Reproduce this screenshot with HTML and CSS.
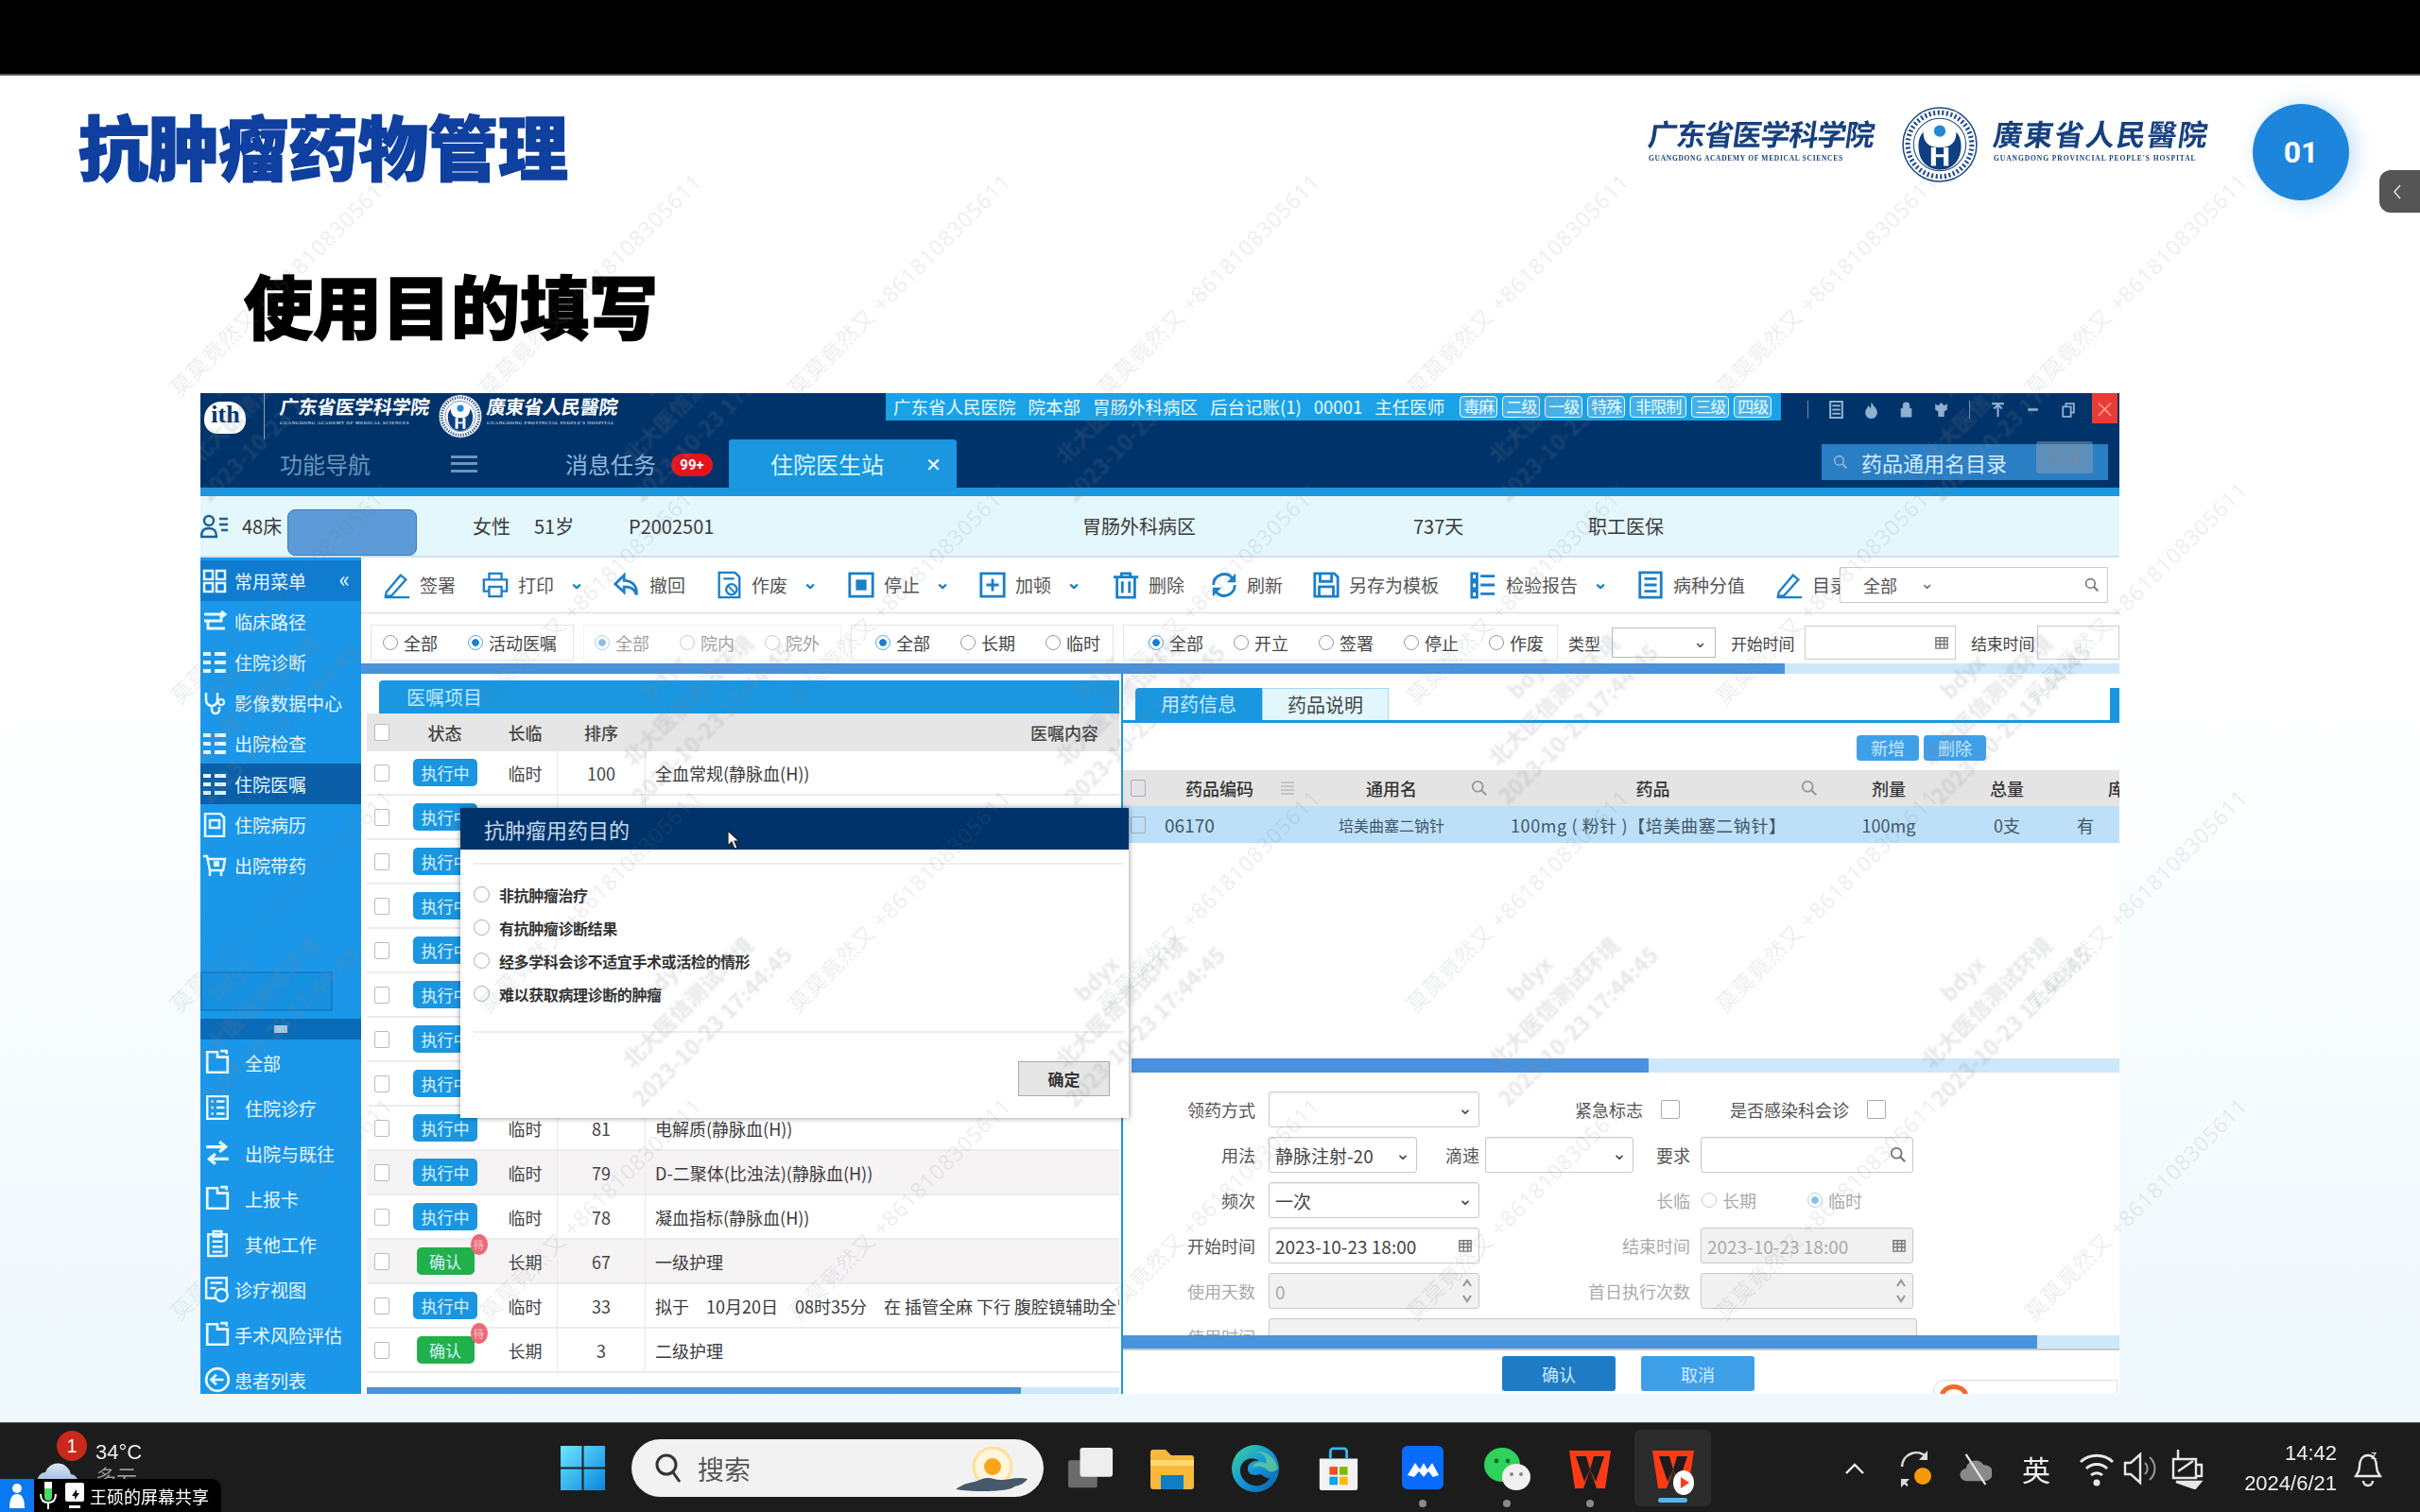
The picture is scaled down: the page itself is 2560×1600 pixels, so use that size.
FILE: index.html
```html
<!DOCTYPE html>
<html lang="zh-CN">
<head>
<meta charset="utf-8">
<title>抗肿瘤药物管理</title>
<link rel="stylesheet" href="styles.css">
</head>
<body>
<svg class="defs" width="0" height="0">
  <defs>
    <symbol id="emblem" viewBox="0 0 80 80">
      <circle cx="40" cy="40" r="38" fill="#fff" stroke="#1d4a86" stroke-width="1.5"/>
      <circle cx="40" cy="40" r="33" fill="none" stroke="#1d4a86" stroke-width="5" stroke-dasharray="2 2.5"/>
      <circle cx="40" cy="40" r="27" fill="none" stroke="#1d4a86" stroke-width="1"/>
      <path d="M40 66c-13 0-22-9-22-25 0-6 2-11 5-14 0 10 5 16 17 16s17-6 17-16c3 3 5 8 5 14 0 16-9 25-22 25z" fill="#0d3f82"/>
      <circle cx="40" cy="26" r="6" fill="#1f8bd6"/>
      <path d="M31 62V43h5v19zM44 62V43h5v19z" fill="#fff"/>
      <path d="M36 50h8v3h-8z" fill="#fff"/>
    </symbol>
    <symbol id="i-pen" viewBox="0 0 32 32"><path d="M4 24 20 5l6 5-16 18-7 1zM2 30h28" fill="none" stroke="currentColor" stroke-width="2.5"/></symbol>
    <symbol id="i-print" viewBox="0 0 32 32"><path d="M9 10V3h14v7M9 23H3V10h26v13h-6M9 18h14v11H9z" fill="none" stroke="currentColor" stroke-width="2.5"/></symbol>
    <symbol id="i-undo" viewBox="0 0 32 32"><path d="M13 5 3 15l10 9v-6c7 0 12 2 14 9 1-9-4-16-14-16z" fill="none" stroke="currentColor" stroke-width="3"/></symbol>
    <symbol id="i-void" viewBox="0 0 32 32"><path d="M5 2h18l5 5v23H5zM10 9h12" fill="none" stroke="currentColor" stroke-width="2.5"/><circle cx="19" cy="21" r="6" fill="none" stroke="currentColor" stroke-width="2.5"/><path d="M15 17l8 8" stroke="currentColor" stroke-width="2"/></symbol>
    <symbol id="i-stop" viewBox="0 0 32 32"><path d="M3 3h26v26H3z" fill="none" stroke="currentColor" stroke-width="3"/><path d="M10 10h12v12H10z" fill="currentColor"/></symbol>
    <symbol id="i-plus" viewBox="0 0 32 32"><path d="M3 3h26v26H3zM16 9v14M9 16h14" fill="none" stroke="currentColor" stroke-width="3"/></symbol>
    <symbol id="i-trash" viewBox="0 0 32 32"><path d="M2 7h28M11 7V3h10v4M6 7v23h20V7M12 12v13M20 12v13" fill="none" stroke="currentColor" stroke-width="3"/></symbol>
    <symbol id="i-refresh" viewBox="0 0 32 32"><path d="M4 16A12 12 0 0 1 25 8l3 3M28 16A12 12 0 0 1 7 24l-3-3" fill="none" stroke="currentColor" stroke-width="3"/><path d="M29 3v10H19zM3 29V19h10z" fill="currentColor"/></symbol>
    <symbol id="i-save" viewBox="0 0 32 32"><path d="M3 3h22l4 4v22H3zM9 3v9h13V3M8 29V18h16v11" fill="none" stroke="currentColor" stroke-width="3"/></symbol>
    <symbol id="i-list" viewBox="0 0 32 32"><path d="M3 3h6v7H3zM3 13h6v7H3zM3 23h6v7H3zM13 6h16M13 16h16M13 26h16" fill="none" stroke="currentColor" stroke-width="3"/></symbol>
    <symbol id="i-doc" viewBox="0 0 32 32"><path d="M4 2h24v28H4zM9 9h14M9 16h14M9 23h14" fill="none" stroke="currentColor" stroke-width="3"/></symbol>
    <symbol id="s-grid" viewBox="0 0 26 26"><path d="M2 2h9v9H2zM15 2h9v9h-9zM2 15h9v9H2zM15 15h9v9h-9z" fill="none" stroke="currentColor" stroke-width="2.5"/></symbol>
    <symbol id="s-path" viewBox="0 0 26 26"><path d="M2 5h18v7H6v8h18M20 2l4 3-4 3M2 12h4" fill="none" stroke="currentColor" stroke-width="3"/></symbol>
    <symbol id="s-rows" viewBox="0 0 26 26"><path d="M1 4h8M1 13h8M1 22h8M13 4h12M13 13h12M13 22h12" fill="none" stroke="currentColor" stroke-width="4"/></symbol>
    <symbol id="s-steth" viewBox="0 0 26 26"><path d="M4 2v8a6 6 0 0 0 12 0V2M10 16v4a4 4 0 0 0 8 0v-3" fill="none" stroke="currentColor" stroke-width="2.5"/><circle cx="20" cy="12" r="3" fill="none" stroke="currentColor" stroke-width="2"/></symbol>
    <symbol id="s-record" viewBox="0 0 26 26"><path d="M3 1h16l4 4v20H3zM8 8h10v8H8z" fill="none" stroke="currentColor" stroke-width="2.5"/></symbol>
    <symbol id="s-cart" viewBox="0 0 26 26"><path d="M1 3h4l3 15h14l2-12H6M8 18v6M20 18v6" fill="none" stroke="currentColor" stroke-width="2.5"/><path d="M12 8h6v6h-6z" fill="currentColor"/></symbol>
    <symbol id="s-folder" viewBox="0 0 26 26"><path d="M3 3h10v5h10v15H3zM16 2h6v3" fill="none" stroke="currentColor" stroke-width="2.5"/></symbol>
    <symbol id="s-form" viewBox="0 0 26 26"><path d="M3 2h20v22H3zM7 7h2M12 7h8M7 13h2M12 13h8M7 19h2M12 19h8" fill="none" stroke="currentColor" stroke-width="2.2"/></symbol>
    <symbol id="s-swap" viewBox="0 0 26 26"><path d="M2 7h17M15 2l6 5-6 5M24 19H7M11 14l-6 5 6 5" fill="none" stroke="currentColor" stroke-width="3"/></symbol>
    <symbol id="s-clip" viewBox="0 0 26 26"><path d="M4 4h18v21H4zM9 1h8v5H9zM8 11h10M8 16h10M8 21h10" fill="none" stroke="currentColor" stroke-width="2.3"/></symbol>
    <symbol id="s-view" viewBox="0 0 26 26"><path d="M2 2h20v13M2 2v20h10M6 7h12M6 12h6" fill="none" stroke="currentColor" stroke-width="2.3"/><circle cx="17" cy="19" r="6" fill="none" stroke="currentColor" stroke-width="2.3"/></symbol>
    <symbol id="s-back" viewBox="0 0 26 26"><circle cx="13" cy="13" r="11" fill="none" stroke="currentColor" stroke-width="2.5"/><path d="M19 13H8M12 8l-5 5 5 5" fill="none" stroke="currentColor" stroke-width="2.5"/></symbol>
    <symbol id="mag" viewBox="0 0 20 20"><circle cx="8" cy="8" r="6" fill="none" stroke="currentColor" stroke-width="2"/><path d="M12.5 12.5 18 18" stroke="currentColor" stroke-width="2.5"/></symbol>
    <symbol id="cal" viewBox="0 0 16 16"><path d="M1 2h14v13H1zM1 6h14M6 2v13M11 2v13M1 10h14" fill="none" stroke="currentColor" stroke-width="1.6"/></symbol>
    <symbol id="spin" viewBox="0 0 12 30"><path d="M2 10l4-6 4 6M2 20l4 6 4-6" fill="none" stroke="currentColor" stroke-width="2.2"/></symbol>
    <symbol id="wps" viewBox="0 0 50 50"><path d="M3 5h44l-6 40h-9L25 25l-7 20H9z" fill="#ff3b16"/><path d="M10 11h11l4 14-6 13zM40 11H29l-4 14 6 13z" fill="#1c1c1c"/></symbol>
  </defs>
</svg>

<div class="topbar"></div>

<main class="slide">
  <header class="slide-head">
    <h1 class="title">抗肿瘤药物管理</h1>
    <div class="hospital">
      <div class="h-name">
        <b>广东省医学科学院</b>
        <small>GUANGDONG ACADEMY OF MEDICAL SCIENCES</small>
      </div>
      <svg class="h-emblem"><use href="#emblem"/></svg>
      <div class="h-name trad">
        <b>廣東省人民醫院</b>
        <small>GUANGDONG PROVINCIAL PEOPLE'S HOSPITAL</small>
      </div>
    </div>
    <div class="num">01</div>
  </header>
  <h2 class="subtitle">使用目的填写</h2>

  <section class="app">
    <div class="app-top">
      <div class="app-logo">
        <div class="cloud">ith</div>
        <div class="mini-name"><b>广东省医学科学院</b><small>GUANGDONG ACADEMY OF MEDICAL SCIENCES</small></div>
        <svg class="mini-emblem"><use href="#emblem"/></svg>
        <div class="mini-name trad"><b>廣東省人民醫院</b><small>GUANGDONG PROVINCIAL PEOPLE'S HOSPITAL</small></div>
      </div>
      <div class="user-band">
        <span>广东省人民医院</span><span>院本部</span><span>胃肠外科病区</span><span>后台记账(1)</span><span>00001</span><span>主任医师</span>
        <div class="grades"><i>毒麻</i><i>二级</i><i>一级</i><i>特殊</i><i class="wide">非限制</i><i>三级</i><i>四级</i></div>
      </div>
      <div class="win-icons">
        <span class="sep"></span>
        <svg viewBox="0 0 14 18"><path d="M1 1h12v16H1zM3 5h8M3 9h8M3 13h8" fill="none" stroke="#8fb0cf" stroke-width="2"/></svg>
        <svg viewBox="0 0 14 18"><path d="M7 1c1 4 6 6 6 11a6 6 0 0 1-12 0C1 9 3 8 4 5c1 1 2 2 2 3 1-2 1-5 1-7z" fill="#8fb0cf"/></svg>
        <svg viewBox="0 0 14 18"><path d="M4 8V5a3 3 0 0 1 6 0v3M2 8h10v8H2z" fill="#8fb0cf" stroke="#8fb0cf"/></svg>
        <svg viewBox="0 0 14 18"><path d="M1 3l3 2 3-3 3 3 3-2v6l-3 2v5H4v-5L1 9z" fill="#8fb0cf"/></svg>
        <span class="sep"></span>
        <svg viewBox="0 0 14 18"><path d="M1 3h12M7 3v13M3 8l4-4 4 4" fill="none" stroke="#8fb0cf" stroke-width="2"/></svg>
        <svg viewBox="0 0 14 18"><path d="M2 9h10" stroke="#8fb0cf" stroke-width="2.5"/></svg>
        <svg viewBox="0 0 14 18"><path d="M2 6h8v10H2zM5 6V3h8v9h-3" fill="none" stroke="#8fb0cf" stroke-width="1.8"/></svg>
      </div>
      <div class="close-red">×</div>
    </div>
    <nav class="app-nav">
      <div class="nav-item func">功能导航<span class="burger"></span></div>
      <div class="nav-item msg">消息任务<span class="badge99">99+</span></div>
      <div class="nav-item active">住院医生站<span class="x">✕</span></div>
      <div class="drug-search"><svg class="drug-mag"><use href="#mag"/></svg>药品通用名目录</div>
      <div class="menu-ghost">菜单</div>
    </nav>
    <div class="stripe"></div>
    <div class="patient">
      <svg class="p-icon" viewBox="0 0 30 26"><circle cx="9" cy="7" r="5" fill="none" stroke="#1e5f97" stroke-width="2.4"/><path d="M1 24c0-7 3-9 8-9s8 2 8 9zM20 5h9M20 11h9M22 17h7" fill="none" stroke="#1e5f97" stroke-width="2.4"/></svg>
      <span>48床</span><span class="mask"></span><span>女性</span><span>51岁</span><span>P2002501</span><span>胃肠外科病区</span><span>737天</span><span>职工医保</span>
    </div>

    <div class="body">
      <aside class="side">
        <div class="s-item head"><svg><use href="#s-grid"/></svg>常用菜单<span class="fold">«</span></div>
        <div class="s-item"><svg><use href="#s-path"/></svg>临床路径</div>
        <div class="s-item"><svg><use href="#s-rows"/></svg>住院诊断</div>
        <div class="s-item"><svg><use href="#s-steth"/></svg>影像数据中心</div>
        <div class="s-item"><svg><use href="#s-rows"/></svg>出院检查</div>
        <div class="s-item sel"><svg><use href="#s-rows"/></svg>住院医嘱</div>
        <div class="s-item"><svg><use href="#s-record"/></svg>住院病历</div>
        <div class="s-item"><svg><use href="#s-cart"/></svg>出院带药</div>
        <div class="s-box"></div>
        <div class="s-split"><span></span></div>
        <div class="s-item low"><svg><use href="#s-folder"/></svg>全部</div>
        <div class="s-item low"><svg><use href="#s-form"/></svg>住院诊疗</div>
        <div class="s-item low"><svg><use href="#s-swap"/></svg>出院与既往</div>
        <div class="s-item low"><svg><use href="#s-folder"/></svg>上报卡</div>
        <div class="s-item low"><svg><use href="#s-clip"/></svg>其他工作</div>
        <div class="s-item low tight"><svg><use href="#s-view"/></svg>诊疗视图</div>
        <div class="s-item low tight"><svg><use href="#s-folder"/></svg>手术风险评估</div>
        <div class="s-item low tight"><svg><use href="#s-back"/></svg>患者列表</div>
      </aside>

      <div class="work">
        <div class="toolbar">
          <div class="tool"><svg><use href="#i-pen"/></svg>签署</div>
          <div class="tool"><svg><use href="#i-print"/></svg>打印<em>⌄</em></div>
          <div class="tool"><svg><use href="#i-undo"/></svg>撤回</div>
          <div class="tool"><svg><use href="#i-void"/></svg>作废<em>⌄</em></div>
          <div class="tool"><svg><use href="#i-stop"/></svg>停止<em>⌄</em></div>
          <div class="tool"><svg><use href="#i-plus"/></svg>加顿<em>⌄</em></div>
          <div class="tool"><svg><use href="#i-trash"/></svg>删除</div>
          <div class="tool"><svg><use href="#i-refresh"/></svg>刷新</div>
          <div class="tool"><svg><use href="#i-save"/></svg>另存为模板</div>
          <div class="tool"><svg><use href="#i-list"/></svg>检验报告<em>⌄</em></div>
          <div class="tool"><svg><use href="#i-doc"/></svg>病种分值</div>
          <div class="tool"><svg><use href="#i-pen"/></svg>目录</div>
          <div class="tool-select">全部<em>⌄</em><svg class="tool-mag"><use href="#mag"/></svg></div>
        </div>

        <div class="filters">
          <div class="f-group g1"><label class="r">全部</label><label class="r on">活动医嘱</label></div>
          <div class="f-group g2 off"><label class="r on">全部</label><label class="r">院内</label><label class="r">院外</label></div>
          <div class="f-group g3"><label class="r on">全部</label><label class="r">长期</label><label class="r">临时</label></div>
          <div class="f-group g4"><label class="r on">全部</label><label class="r">开立</label><label class="r">签署</label><label class="r">停止</label><label class="r">作废</label></div>
          <span class="f-type">类型</span><span class="f-sel">⌄</span>
          <span class="f-lab">开始时间</span><span class="f-date"><svg class="cal"><use href="#cal"/></svg></span>
          <span class="f-lab">结束时间</span><span class="f-end"></span>
        </div>
        <div class="bar top"><span></span></div>

        <div class="split">
          <section class="orders">
            <div class="orders-tab">医嘱项目</div>
            <div class="o-grid o-head"><span class="box"></span><span>状态</span><span>长临</span><span>排序</span><span class="o-right">医嘱内容</span></div>
            <div class="o-grid"><span class="box"></span><span class="chip">执行中</span><span>临时</span><span>100</span><span class="o-text">全血常规(静脉血(H))</span></div>
            <div class="o-grid"><span class="box"></span><span class="chip">执行中</span><span>临时</span><span>99</span><span class="o-text"></span></div>
            <div class="o-grid"><span class="box"></span><span class="chip">执行中</span><span>临时</span><span>98</span><span class="o-text"></span></div>
            <div class="o-grid"><span class="box"></span><span class="chip">执行中</span><span>临时</span><span>97</span><span class="o-text"></span></div>
            <div class="o-grid"><span class="box"></span><span class="chip">执行中</span><span>临时</span><span>96</span><span class="o-text"></span></div>
            <div class="o-grid"><span class="box"></span><span class="chip">执行中</span><span>临时</span><span>95</span><span class="o-text"></span></div>
            <div class="o-grid"><span class="box"></span><span class="chip">执行中</span><span>临时</span><span>94</span><span class="o-text"></span></div>
            <div class="o-grid"><span class="box"></span><span class="chip">执行中</span><span>临时</span><span>93</span><span class="o-text"></span></div>
            <div class="o-grid"><span class="box"></span><span class="chip">执行中</span><span>临时</span><span>81</span><span class="o-text">电解质(静脉血(H))</span></div>
            <div class="o-grid alt"><span class="box"></span><span class="chip">执行中</span><span>临时</span><span>79</span><span class="o-text">D-二聚体(比浊法)(静脉血(H))</span></div>
            <div class="o-grid"><span class="box"></span><span class="chip">执行中</span><span>临时</span><span>78</span><span class="o-text">凝血指标(静脉血(H))</span></div>
            <div class="o-grid alt"><span class="box"></span><span class="chip ok">确认<b>待</b></span><span>长期</span><span>67</span><span class="o-text">一级护理</span></div>
            <div class="o-grid"><span class="box"></span><span class="chip">执行中</span><span>临时</span><span>33</span><span class="o-text">拟于　10月20日　08时35分　在 插管全麻 下行 腹腔镜辅助全胃切除术</span></div>
            <div class="o-grid"><span class="box"></span><span class="chip ok">确认<b>待</b></span><span>长期</span><span>3</span><span class="o-text">二级护理</span></div>
            <div class="bar bottom-left"><span></span></div>
          </section>

          <section class="detail">
            <div class="d-tabs"><div class="d-tab on">用药信息</div><div class="d-tab">药品说明</div></div>
            <div class="d-actions"><button class="mini">新增</button><button class="mini">删除</button></div>
            <div class="d-grid d-head">
              <span class="box"></span><span>药品编码</span><span class="sort"></span><span class="d-name">通用名</span><svg class="d-mag"><use href="#mag"/></svg><span class="d-drug">药品</span><svg class="d-mag"><use href="#mag"/></svg><span>剂量</span><span>总量</span><span class="clip">库</span>
            </div>
            <div class="d-grid d-row">
              <span class="box"></span><span class="code">06170</span><span></span><span class="d-name sm">培美曲塞二钠针</span><span></span><span class="d-drug-text">100mg ( 粉针 )【培美曲塞二钠针】</span><span></span><span>100mg</span><span>0支</span><span class="have">有</span>
            </div>
            <div class="bar form-top"><span></span></div>
            <div class="form">
              <div class="f-row"><label class="l w140">领药方式</label><span class="ctl w223">⌄</span><label class="l w173">紧急标志</label><span class="chk"></span><label class="l w179">是否感染科会诊</label><span class="chk"></span></div>
              <div class="f-row"><label class="l w140">用法</label><span class="ctl w157 left">静脉注射-20<em>⌄</em></span><label class="l w66">滴速</label><span class="ctl w157 gap6">⌄</span><label class="l w60">要求</label><span class="ctl w225 gap11"><svg class="ctl-mag"><use href="#mag"/></svg></span></div>
              <div class="f-row"><label class="l w140">频次</label><span class="ctl w223 left">一次<em>⌄</em></span><label class="l w223l off">长临</label><label class="r off">长期</label><label class="r on off">临时</label></div>
              <div class="f-row"><label class="l w140">开始时间</label><span class="ctl w223 left date">2023-10-23 18:00<svg class="cal"><use href="#cal"/></svg></span><label class="l w223l off">结束时间</label><span class="ctl w225 gap11 left date dis">2023-10-23 18:00<svg class="cal"><use href="#cal"/></svg></span></div>
              <div class="f-row"><label class="l w140 off">使用天数</label><span class="ctl w223 left dis">0<svg class="spin"><use href="#spin"/></svg></span><label class="l w223l off">首日执行次数</label><span class="ctl w225 gap11 left dis"><i></i><svg class="spin"><use href="#spin"/></svg></span></div>
              <div class="f-row"><label class="l w140 off">使用时间</label><span class="ctl w686 dis"></span></div>
            </div>
            <div class="bar form-bottom"><span></span></div>
            <div class="d-foot">
              <button class="big dark">确认</button><button class="big">取消</button>
              <div class="corner"><span class="swirl"></span><i></i><i></i></div>
            </div>
          </section>
        </div>
      </div>
    </div>

    <div class="modal">
      <div class="m-title">抗肿瘤用药目的</div>
      <div class="m-body">
        <label class="m-r">非抗肿瘤治疗</label>
        <label class="m-r">有抗肿瘤诊断结果</label>
        <label class="m-r">经多学科会诊不适宜手术或活检的情形</label>
        <label class="m-r">难以获取病理诊断的肿瘤</label>
      </div>
      <div class="m-foot"><button class="m-ok">确定</button></div>
    </div>
    <svg class="cursor" viewBox="0 0 14 22"><path d="M1 1v16l4-4 3 7 3-1-3-7h5z" fill="#fff" stroke="#222" stroke-width="1.2"/></svg>

    <div class="wm2">
      <span><b>bdyx</b><b>北大医信测试环境</b><b>2023-10-23 17:44:45</b></span>
      <span><b>bdyx</b><b>北大医信测试环境</b><b>2023-10-23 17:44:45</b></span>
      <span><b>bdyx</b><b>北大医信测试环境</b><b>2023-10-23 17:44:45</b></span>
      <span><b>bdyx</b><b>北大医信测试环境</b><b>2023-10-23 17:44:45</b></span>
      <span><b>bdyx</b><b>北大医信测试环境</b><b>2023-10-23 17:44:45</b></span>
      <span><b>bdyx</b><b>北大医信测试环境</b><b>2023-10-23 17:44:45</b></span>
      <span><b>bdyx</b><b>北大医信测试环境</b><b>2023-10-23 17:44:45</b></span>
      <span><b>bdyx</b><b>北大医信测试环境</b><b>2023-10-23 17:44:45</b></span>
      <span><b>bdyx</b><b>北大医信测试环境</b><b>2023-10-23 17:44:45</b></span>
      <span><b>bdyx</b><b>北大医信测试环境</b><b>2023-10-23 17:44:45</b></span>
      <span><b>bdyx</b><b>北大医信测试环境</b><b>2023-10-23 17:44:45</b></span>
      <span><b>bdyx</b><b>北大医信测试环境</b><b>2023-10-23 17:44:45</b></span>
      <span><b>bdyx</b><b>北大医信测试环境</b><b>2023-10-23 17:44:45</b></span>
      <span><b>bdyx</b><b>北大医信测试环境</b><b>2023-10-23 17:44:45</b></span>
      <span><b>bdyx</b><b>北大医信测试环境</b><b>2023-10-23 17:44:45</b></span>
    </div>
  </section>

  <div class="wm1">
    <span>莫莫竟然又 +8618108305611</span><span>莫莫竟然又 +8618108305611</span><span>莫莫竟然又 +8618108305611</span><span>莫莫竟然又 +8618108305611</span><span>莫莫竟然又 +8618108305611</span><span>莫莫竟然又 +8618108305611</span><span>莫莫竟然又 +8618108305611</span>
    <span>莫莫竟然又 +8618108305611</span><span>莫莫竟然又 +8618108305611</span><span>莫莫竟然又 +8618108305611</span><span>莫莫竟然又 +8618108305611</span><span>莫莫竟然又 +8618108305611</span><span>莫莫竟然又 +8618108305611</span><span>莫莫竟然又 +8618108305611</span>
    <span>莫莫竟然又 +8618108305611</span><span>莫莫竟然又 +8618108305611</span><span>莫莫竟然又 +8618108305611</span><span>莫莫竟然又 +8618108305611</span><span>莫莫竟然又 +8618108305611</span><span>莫莫竟然又 +8618108305611</span><span>莫莫竟然又 +8618108305611</span>
    <span>莫莫竟然又 +8618108305611</span><span>莫莫竟然又 +8618108305611</span><span>莫莫竟然又 +8618108305611</span><span>莫莫竟然又 +8618108305611</span><span>莫莫竟然又 +8618108305611</span><span>莫莫竟然又 +8618108305611</span><span>莫莫竟然又 +8618108305611</span>
  </div>

  <div class="handle"><svg viewBox="0 0 10 18"><path d="M8 2 2 9l6 7" fill="none" stroke="#ddd" stroke-width="1.6"/></svg></div>
</main>

<footer class="taskbar">
  <div class="weather">
    <svg class="w-icon" viewBox="0 0 46 40"><defs><linearGradient id="cl" x1="0" y1="0" x2="0" y2="1"><stop offset="0" stop-color="#dfe7f3"/><stop offset="1" stop-color="#7fa9dc"/></linearGradient></defs><path d="M10 38a9 9 0 0 1-1-18 14 14 0 0 1 27 2 8 8 0 0 1-1 16z" fill="url(#cl)"/></svg>
    <span class="w-badge">1</span>
    <div class="w-text"><span>34°C</span><span class="dim">多云</span></div>
  </div>
  <div class="share">
    <span class="share-user"><svg viewBox="0 0 20 30"><circle cx="10" cy="7" r="5" fill="#fff"/><path d="M2 28c0-11 3-15 8-15s8 4 8 15z" fill="#fff"/></svg></span>
    <svg class="share-mic" viewBox="0 0 20 32"><rect x="6" y="1" width="8" height="20" rx="4" fill="#4cd964"/><path d="M6 1h8v7H6z" fill="#fff"/><path d="M2 14c0 6 3 9 8 9s8-3 8-9M10 23v7" fill="none" stroke="#fff" stroke-width="2"/></svg>
    <svg class="share-scr" viewBox="0 0 22 32"><rect x="1" y="2" width="20" height="20" rx="2" fill="#fff"/><path d="M8 16l5-7v4h3l-5 7v-4z" fill="#111"/><path d="M5 26h12v3H5z" fill="#fff"/></svg>
    <span class="share-t">王硕的屏幕共享</span>
  </div>
  <div class="tb-center">
    <svg class="start" viewBox="0 0 48 48"><defs><linearGradient id="win" x1="0" y1="0" x2="1" y2="1"><stop offset="0" stop-color="#6ce6ff"/><stop offset="1" stop-color="#0a86e0"/></linearGradient></defs><path d="M0 0h23v23H0zM25 0h23v23H25zM0 25h23v23H0zM25 25h23v23H25z" fill="url(#win)"/></svg>
    <div class="search">
      <svg class="search-i" viewBox="0 0 30 34"><circle cx="13" cy="13" r="10" fill="none" stroke="#333" stroke-width="3"/><path d="M20 21l7 10" stroke="#333" stroke-width="3"/></svg>
      <span>搜索</span>
      <svg class="sun" viewBox="0 0 90 56"><circle cx="45" cy="26" r="20" fill="#fff6dc" stroke="#ffe09a" stroke-width="3"/><circle cx="45" cy="26" r="9" fill="#f9a51a"/><path d="M6 50c10-8 18-6 28-11 8-3 12 1 20 1 10 0 16-4 28-1-4 5-8 7-14 8-4 6-44 6-62 3z" fill="#46586a"/></svg>
    </div>
    <div class="apps">
      <svg class="app-i taskv" viewBox="0 0 50 46"><rect x="0" y="14" width="32" height="30" rx="2" fill="#6b6b6b"/><rect x="13" y="0" width="36" height="32" rx="3" fill="#eee"/></svg>
      <svg class="app-i" viewBox="0 0 48 46"><path d="M1 6a3 3 0 0 1 3-3h13l6 6h21a3 3 0 0 1 3 3v30a3 3 0 0 1-3 3H4a3 3 0 0 1-3-3z" fill="#f6b93b"/><path d="M1 14h46v6H1z" fill="#ffd86b"/><path d="M12 30h24v15H12z" fill="#0d7fc4"/></svg>
      <svg class="app-i" viewBox="0 0 50 50"><defs><linearGradient id="edge" x1="0" y1="0" x2="1" y2="1"><stop offset="0" stop-color="#3fd79a"/><stop offset=".5" stop-color="#1597d8"/><stop offset="1" stop-color="#0a5da8"/></linearGradient></defs><circle cx="25" cy="25" r="25" fill="url(#edge)"/><path d="M30 31c-8 3-14-1-13-7 1-5 6-8 12-7-7-6-19-2-20 9-1 9 9 19 20 17 5-1 9-4 11-8-3 1-6-2-10-4z" fill="#1c1c1c"/><path d="M21 25c4-4 12-3 17 2 4 3 8 1 11-2-2-11-12-19-23-18 9 2 12 8 10 13-5-4-12-2-15 5z" fill="#7fe08b" opacity=".6"/></svg>
      <svg class="app-i" viewBox="0 0 48 50"><path d="M3 14h42v32a3 3 0 0 1-3 3H6a3 3 0 0 1-3-3z" fill="#f2f2f2"/><path d="M15 14V6a3 3 0 0 1 3-3h12a3 3 0 0 1 3 3v8" fill="none" stroke="#39b6e8" stroke-width="3"/><path d="M14 23h9v9h-9z" fill="#f25022"/><path d="M25 23h9v9h-9z" fill="#7fba00"/><path d="M14 34h9v9h-9z" fill="#00a4ef"/><path d="M25 34h9v9h-9z" fill="#ffb900"/></svg>
      <span class="app-w"><svg class="app-i meet" viewBox="0 0 44 46"><rect width="44" height="46" rx="6" fill="#0a6cff"/><path d="M6 31l8-13 5 7 4-7 4 7 5-7 7 13-6 2-5-6-5 6-5-6-5 6z" fill="#fff"/></svg><i class="dot"></i></span>
      <span class="app-w"><svg class="app-i chat" viewBox="0 0 50 50"><ellipse cx="20" cy="20" rx="19" ry="18" fill="#2fd35c"/><circle cx="14" cy="16" r="2.4" fill="#0b6b2b"/><circle cx="26" cy="16" r="2.4" fill="#0b6b2b"/><ellipse cx="35" cy="33" rx="15" ry="14" fill="#f0f0f0"/><circle cx="30" cy="30" r="2" fill="#888"/><circle cx="40" cy="30" r="2" fill="#888"/></svg><i class="dot"></i></span>
      <span class="app-w"><svg class="app-i wps"><use href="#wps"/></svg><i class="dot"></i></span>
      <span class="app-w cur"><svg class="app-i wps"><use href="#wps"/></svg><svg class="play" viewBox="0 0 24 28"><ellipse cx="12" cy="14" rx="11" ry="13" fill="#fff"/><path d="M9 8l9 6-9 6z" fill="#ff3b16"/></svg><i class="line"></i></span>
    </div>
  </div>
  <div class="tray">
    <svg class="chev" viewBox="0 0 24 14"><path d="M3 12 12 3l9 9" fill="none" stroke="#eee" stroke-width="2.4"/></svg>
    <svg class="t-sync" viewBox="0 0 36 44"><path d="M30 10A15 15 0 0 0 4 20M5 34A15 15 0 0 0 10 40" fill="none" stroke="#ddd" stroke-width="2.6"/><path d="M31 3v10H22zM3 42V33h9z" fill="#ddd"/><circle cx="26" cy="30" r="9" fill="#f49a0a"/></svg>
    <svg class="t-cloud" viewBox="0 0 36 40"><path d="M8 34a7 7 0 0 1-1-14 11 11 0 0 1 20-4 8 8 0 0 1 2 18z" fill="#8a8a8a"/><path d="M7 4l22 34" stroke="#e8e8e8" stroke-width="2.4"/></svg>
    <span class="t-ime">英</span>
    <svg class="t-wifi" viewBox="0 0 38 42"><path d="M2 14a25 25 0 0 1 34 0M8 21a16 16 0 0 1 22 0M13 28a9 9 0 0 1 12 0" fill="none" stroke="#e8e8e8" stroke-width="3"/><circle cx="19" cy="36" r="3.5" fill="#e8e8e8"/></svg>
    <svg class="t-vol" viewBox="0 0 36 42"><path d="M2 15h6l10-9v30l-10-9H2z" fill="none" stroke="#e8e8e8" stroke-width="2.4"/><path d="M23 15a8 8 0 0 1 0 12M28 9a16 16 0 0 1 0 24" fill="none" stroke="#9a9a9a" stroke-width="2"/></svg>
    <svg class="t-bat" viewBox="0 0 36 44"><path d="M3 12h24v20H3zM8 12V2M27 18h6v12h-6" fill="none" stroke="#e8e8e8" stroke-width="2.4"/><path d="M8 25 24 14M6 36h26l-6 7z" stroke="#e8e8e8" stroke-width="2.4" fill="#e8e8e8"/></svg>
    <div class="clock"><span>14:42</span><span>2024/6/21</span></div>
    <svg class="t-bell" viewBox="0 0 30 44"><path d="M15 8c-6 0-9 5-9 12 0 6-3 8-4 10h26c-1-2-4-4-4-10 0-7-3-12-9-12zM10 35a5 5 0 0 0 10 0" fill="none" stroke="#e8e8e8" stroke-width="2.4"/><text x="18" y="12" class="zz">z</text></svg>
  </div>
</footer>
</body>
</html>
```

FILE: styles.css
```css
* { box-sizing: border-box; }
html, body { margin: 0; padding: 0; }
body {
  width: 2560px; height: 1600px; overflow: hidden; display: flex; flex-direction: column;
  font-family: "Noto Sans CJK SC", "Noto Sans", sans-serif; color: #333; background: #000;
}
.defs { position: absolute; }
button { font: inherit; border: 0; padding: 0; }
svg { display: block; flex: none; }

.topbar { height: 80px; background: #000; border-bottom: 2px solid #555; flex: none; }

.slide {
  position: relative; height: 1425px; flex: none; overflow: hidden;
  background: linear-gradient(#fff 0, #fff 45%, #eef8fd 100%);
  padding: 0 0 0 212px;
}
.slide-head { display: flex; align-items: flex-start; height: 130px; margin-left: -129px; }
.title {
  margin: 28px 0 0; font-size: 74px; line-height: 90px; font-weight: 900; color: #0f3f9f;
  -webkit-text-stroke: 1.5px #0f3f9f; white-space: nowrap; filter: blur(.7px);
}
.hospital { display: flex; align-items: flex-start; margin: 30px 0 0 1143px; filter: blur(.4px); }
.h-name { width: 240px; color: #17407f; padding-top: 9px; }
.h-name b { display: block; font-size: 31px; line-height: 44px; font-weight: 700; letter-spacing: -1.2px; white-space: nowrap; transform: skewX(-8deg); }
.h-name small { display: block; font: 700 7.5px/10px "Liberation Serif", serif; white-space: nowrap; letter-spacing: .7px; }
.h-name.trad { width: 232px; }
.h-name.trad b { font-family: "Noto Sans CJK TC", sans-serif; letter-spacing: 1.6px; }
.h-name.trad small { letter-spacing: .95px; }
.h-emblem { width: 82px; height: 82px; margin: 2px 16px 0 27px; }
.num {
  width: 102px; height: 102px; border-radius: 50%; background: #1d86dc; color: #fff;
  font: 700 32px/102px Roboto, sans-serif; text-align: center; margin: 30px 0 0 42px;
  box-shadow: 6px 0 22px rgba(40,140,220,.28); flex: none;
}
.subtitle {
  margin: 0 0 0 46px; font-size: 73px; line-height: 90px; height: 206px; padding-top: 66px; font-weight: 900; color: #000;
  -webkit-text-stroke: 1.5px #000; filter: blur(.7px);
}
.handle {
  position: absolute; left: 2517px; top: 100px; width: 43px; height: 45px; background: #555;
  border-radius: 12px 0 0 12px; display: flex; align-items: center; padding-left: 14px;
}
.handle svg { width: 10px; height: 18px; }

/* application */
.app {
  position: relative; width: 2030px; height: 1059px; overflow: hidden; background: #fff;
  font-size: 18px; filter: blur(.75px);
  display: flex; flex-direction: column;
}
.app-top { height: 49px; display: flex; background: #00336a; flex: none; }
.app-logo { width: 725px; display: flex; color: #fff; align-items: flex-start; }
.cloud {
  width: 68px; height: 49px; border-right: 1px solid #8aa6c6; font: 700 26px/46px "Liberation Serif", serif;
  color: #00336a; position: relative; z-index: 0; text-align: center; padding-right: 14px;
}
.cloud::before { content: ""; position: absolute; left: 4px; top: 9px; width: 44px; height: 34px; background: #fff; border-radius: 18px 18px 14px 14px; z-index: -1; }
.mini-name { width: 162px; margin-left: 16px; }
.mini-name b { display: block; font-size: 20px; line-height: 28px; white-space: nowrap; transform: skewX(-8deg); letter-spacing: -.2px; }
.mini-name small { display: block; font: 5px/8px "Liberation Serif", serif; letter-spacing: .6px; white-space: nowrap; }
.mini-name.trad { width: 146px; margin-left: 4px; }
.mini-name.trad b { font-family: "Noto Sans CJK TC", sans-serif; }
.mini-emblem { width: 48px; height: 49px; margin-left: 5px; }
.user-band {
  width: 947px; height: 29px; background: #1ba2e6; color: #eafaff; font-size: 18.5px; line-height: 29px;
  display: flex; padding-left: 8px; gap: 13px; white-space: nowrap;
}
.grades { display: flex; gap: 5px; margin-left: 3px; align-items: center; }
.grades i { width: 40px; height: 23px; border: 1.5px solid #e4fbff; border-radius: 4px; font: 400 17px/20px "Noto Sans CJK SC", sans-serif; text-align: center; background: rgba(255,255,255,.18); letter-spacing: -1px; }
.grades i.wide { width: 60px; }
.win-icons { width: 331px; display: flex; align-items: flex-start; gap: 22px; padding: 8px 0 0 28px; }
.win-icons svg { width: 15px; height: 19px; }
.win-icons .sep { width: 1px; height: 19px; background: #6f8fb2; }
.close-red { width: 27px; height: 32px; background: #e83c36; color: #ff9a95; font-size: 22px; line-height: 30px; text-align: center; flex: none; margin-left: -2px; }

.app-nav { height: 51px; background: #00336a; display: flex; flex: none; color: #8fb6da; font-size: 24px; position: relative; }
.nav-item { display: flex; align-items: center; white-space: nowrap; line-height: 51px; }
.func { width: 386px; padding-left: 84px; opacity: .75; }
.burger { width: 28px; height: 18px; margin-left: 85px; border-top: 3px solid #8fb6da; border-bottom: 3px solid #8fb6da; position: relative; }
.burger::after { content: ""; position: absolute; left: 0; right: 0; top: 4.5px; height: 3px; background: #8fb6da; }
.msg { width: 173px; position: relative; }
.badge99 { position: absolute; left: 112px; top: 15px; width: 44px; height: 24px; background: #e5141c; border-radius: 12px; color: #fff; font: 700 15px/24px Roboto, sans-serif; text-align: center; }
.active { width: 241px; height: 51px; background: #1a97df; color: #d8f4ff; padding-left: 44px; border-radius: 3px 3px 0 0; }
.x { color: #fff; font-size: 20px; margin-left: 44px; }
.drug-search {
  margin: 5px 0 0 915px; width: 303px; height: 38px; background: #2a7ec4; color: #d4ecff;
  font-size: 22px; line-height: 38px; padding-left: 42px; position: relative;
}
.drug-mag { position: absolute; left: 12px; top: 11px; width: 16px; height: 16px; color: #8fb6da; }
.menu-ghost { position: absolute; left: 1942px; top: 2px; width: 60px; height: 34px; background: rgba(150,165,180,.45); color: #6f8aa5; font-size: 20px; line-height: 34px; text-align: center; border-radius: 3px; }

.stripe { height: 9px; background: #1a97df; flex: none; }
.patient {
  height: 65px; flex: none; background: #e3f7fd; border-bottom: 2px solid #cfe1ea; font-size: 20px; color: #3a3a3a;
  display: grid; grid-template-columns: 44px 48px 196px 65px 100px 480px 350px 185px 1fr; align-items: center; line-height: 1;
}
.p-icon { width: 30px; height: 26px; }
.mask { width: 137px; height: 49px; background: #5d9ad8; border-radius: 8px; border: 1px solid #3f7bb8; margin-top: 14px; }

.body { flex: 1; display: flex; min-height: 0; }
.side { width: 170px; flex: none; background: #1a97e8; color: #eaf8ff; font-size: 19px; padding-top: 3px; overflow: hidden; }
.s-item { height: 43px; display: flex; align-items: center; padding-left: 2px; white-space: nowrap; position: relative; }
.s-item svg { width: 26px; height: 26px; margin-right: 8px; color: #e8f8ff; }
.s-item.head { background: #107cd0; }
.s-item.sel { background: #0a5fa8; }
.fold { position: absolute; right: 12px; top: 4px; font-size: 24px; line-height: 30px; }
.s-box { height: 42px; width: 140px; margin-top: 91px; border: 2px solid #1380cc; background: #1690e0; }
.s-split { height: 22px; margin-top: 8px; background: #0a6bb8; display: flex; align-items: center; justify-content: center; }
.s-split span { width: 14px; height: 8px; background: #a8c8e2; }
.s-item.low { height: 48px; padding-left: 4px; }
.s-item.low svg { width: 28px; height: 30px; margin-right: 15px; }
.s-item.low.tight svg { margin-right: 4px; }

.work { flex: 1; min-width: 0; display: flex; flex-direction: column; background: #fff; }
.toolbar {
  height: 60px; flex: none; padding-left: 23px; display: grid; align-items: center; border-bottom: 3px solid #eee;
  grid-template-columns: 104px 139px 108px 140px 139px 141px 104px 108px 166px 177px 147px 68px 284px;
  color: #555; font-size: 19px;
}
.tool { display: flex; align-items: center; white-space: nowrap; }
.tool svg { width: 30px; height: 30px; margin-right: 9px; color: #1c7fc8; }
.tool em { font-style: normal; color: #1c7fc8; margin-left: 16px; font-weight: 700; margin-top: -8px; }
.tool-select { height: 38px; border: 1px solid #ccc; width: 284px; display: flex; align-items: center; padding-left: 24px; position: relative; background: #fff; font-size: 18px; }
.tool-select em { font-style: normal; color: #666; margin-left: 24px; margin-top: -8px; }
.tool-mag { position: absolute; right: 8px; top: 10px; width: 16px; height: 16px; color: #777; }

.filters { height: 52px; flex: none; display: flex; align-items: center; padding: 10px 0 2px 10px; white-space: nowrap; font-size: 18px; color: #444; }
.f-group { height: 38px; display: flex; align-items: center; border: 1px solid #e4e4e4; margin-right: 10px; flex: none; }
.r { width: 90px; display: flex; align-items: center; flex: none; font-size: 18px; }
.r::before { content: ""; width: 14px; height: 14px; border: 1.5px solid #999; border-radius: 50%; margin-right: 6px; flex: none; background: #fff; }
.r.on::before { background: radial-gradient(circle, #1a7fd0 0 3.5px, #fff 4px); border-color: #5aa8e0; }
.off { opacity: .5; }
.g1 { width: 215px; padding-left: 12px; }
.g2 { width: 273px; padding-left: 11px; }
.g3 { width: 278px; padding-left: 25px; }
.g4 { width: 460px; padding-left: 26px; }
.f-type { width: 46px; font-size: 17px; margin-left: 1px; }
.f-sel { width: 110px; height: 32px; border: 1px solid #bbb; text-align: right; padding-right: 8px; line-height: 24px; }
.f-lab { width: 78px; font-size: 17px; margin-left: 16px; letter-spacing: -.2px; }
.f-date { width: 160px; height: 36px; border: 1px solid #ccc; position: relative; flex: none; }
.f-end { flex: 1; height: 36px; border: 1px solid #ccc; }
.f-lab + .f-end { margin-left: -8px; }
.cal { position: absolute; right: 7px; top: 50%; margin-top: -8px; width: 14px; height: 16px; color: #777; }

.bar { height: 11px; background: #cde8fa; flex: none; }
.bar span { display: block; height: 100%; background: #4a92dc; }
.bar.top span { width: 1506px; }

.split { flex: 1; min-height: 0; display: flex; }
.orders { width: 806px; flex: none; padding: 7px 2px 0 6px; display: flex; flex-direction: column; background: #fff; border-right: 2px solid #1a97df; }
.orders-tab { height: 35px; margin-left: 13px; background: #1a97e0; color: #bfe8ff; font-size: 20px; line-height: 35px; padding-left: 29px; border-radius: 4px 0 0 0; }
.o-grid {
  display: grid; grid-template-columns: 32px 102px 68px 93px 1fr; height: 47px; align-items: center; text-align: center;
  border-bottom: 2px solid #ececec; font-size: 18px; color: #444; white-space: nowrap;
}
.o-grid > span { border-right: 1px solid #e8e8e8; height: 100%; display: flex; align-items: center; justify-content: center; min-width: 0; }
.o-grid > .box { border: 1.5px solid #bbb; width: 16px; height: 18px; border-radius: 2px; justify-self: center; background: #fff; }
.o-grid > .chip { height: 29px; width: 68px; justify-self: center; background: #1a96e0; color: #d5f1ff; border: 0; border-radius: 5px; font-size: 17px; position: relative; }
.o-grid > .chip.ok { width: 61px; background: #21b04a; }
.chip b { position: absolute; right: -14px; top: -14px; width: 18px; height: 22px; border-radius: 50%; background: #ec6a78; color: #f9c8cd; font-size: 11px; line-height: 22px; font-weight: 400; }
.o-grid > .o-text { justify-content: flex-start; padding-left: 10px; overflow: hidden; border: 0; color: #3a3a3a; }
.o-grid > .o-right { justify-content: flex-end; padding-right: 22px; border: 0; }
.o-head { height: 40px; background: #e6e6e6; border: 0; font-weight: 500; }
.alt { background: #f6f3f5; }
.bar.bottom-left { margin-top: auto; height: 7px; }
.bar.bottom-left span { width: 692px; }

.detail { flex: 1; min-width: 0; display: flex; flex-direction: column; }
.d-tabs { height: 37px; margin-top: 15px; display: flex; padding-left: 13px; border-bottom: 3px solid #1a97df; border-right: 10px solid #1a97df; flex: none; }
.d-tab { width: 134px; height: 34px; background: #e2f7fc; color: #444; font-size: 20px; line-height: 34px; text-align: center; border: 1.5px solid #9fd9ef; border-bottom: 0; }
.d-tab.on { background: #1a97df; color: #c8ecff; border: 0; border-radius: 4px 0 0 0; }
.d-actions { display: flex; justify-content: flex-end; gap: 5px; padding: 13px 141px 10px 0; flex: none; }
.mini { width: 66px; height: 27px; background: #3fa0ea; color: #c8e6ff; border-radius: 4px; font-size: 18px; line-height: 27px; }
.d-grid { display: grid; grid-template-columns: 42px 120px 24px 170px 42px 307px 42px 126px 124px 1fr; align-items: center; flex: none; white-space: nowrap; font-size: 18px; }
.d-head { height: 38px; background: #e4e4e4; font-weight: 500; text-align: center; }
.d-row { height: 39px; background: #bde0f8; color: #41566a; }
.d-row > span { text-align: center; }
.d-row .code { font-size: 19px; text-align: left; padding-left: 2px; }
.d-name { padding-left: 26px; }
.d-name.sm { font-size: 16px; }
.d-drug { padding-left: 18px; }
.d-row .d-drug-text { text-align: left; padding-left: 12px; letter-spacing: .6px; }
.d-row .have { text-align: left; padding-left: 12px; }
.box { width: 16px; height: 18px; border: 1.5px solid #aab; border-radius: 2px; }
.d-grid .box { justify-self: start; margin-left: 8px; }
.sort { width: 14px; height: 14px; background: repeating-linear-gradient(#c5c5c5 0 2px, transparent 2px 4px); justify-self: center; }
.d-mag { width: 18px; height: 20px; color: #999; justify-self: center; }
.clip { overflow: hidden; text-align: left; padding-left: 45px; }
.bar.form-top { margin-top: 228px; margin-left: 9px; height: 15px; }
.bar.form-top span { width: 547px; }
.form { height: 278px; overflow: hidden; padding-top: 20px; flex: none; }
.f-row { display: flex; height: 38px; margin-bottom: 10px; align-items: center; font-size: 18px; color: #555; white-space: nowrap; }
.l { text-align: right; flex: none; display: block; }
.w140 { width: 140px; margin-right: 14px; }
.w173 { width: 173px; }
.w179 { width: 179px; }
.w66 { width: 66px; }
.w60 { width: 60px; }
.w223l { width: 223px; }
.w223l + .r { margin-left: 12px; width: 112px; }
.ctl {
  height: 38px; border: 1.5px solid #c9c9c9; border-radius: 3px; flex: none; display: flex; align-items: center; justify-content: flex-end;
  padding: 0 6px 8px; background: #fff; position: relative; font-size: 19px; color: #444; box-shadow: inset 0 1px 2px #eee;
}
.ctl.left { justify-content: space-between; padding-bottom: 0; }
.ctl.left em { font-style: normal; margin-top: -8px; }
.ctl.date { padding-right: 28px; }
.w223 { width: 223px; }
.w157 { width: 157px; }
.w225 { width: 225px; }
.w686 { width: 686px; }
.gap6 { margin-left: 6px; }
.gap11 { margin-left: 11px; }
.dis { background: #f1f1f1; color: #aaa; }
.spin { width: 12px; height: 30px; color: #999; }
.chk { width: 20px; height: 20px; border: 1.5px solid #aaa; border-radius: 2px; margin-left: 19px; background: #fff; flex: none; }
.ctl-mag { width: 18px; height: 20px; color: #777; margin-top: 8px; }
.bar.form-bottom { height: 14px; box-shadow: 0 2px 0 #c8c8c8; }
.bar.form-bottom span { width: 967px; }
.d-foot { flex: 1; display: flex; padding: 8px 0 0 401px; gap: 27px; position: relative; overflow: hidden; }
.big { width: 120px; height: 37px; background: #3fa0ea; color: #cfeaff; border-radius: 3px; font-size: 18px; }
.big.dark { background: #1f7cc4; }
.corner { position: absolute; left: 857px; top: 33px; width: 195px; height: 30px; border: 1.5px solid #ddd; border-radius: 12px 0 0 0; }
.swirl { position: absolute; left: 6px; top: 4px; width: 30px; height: 24px; border-radius: 50%; border: 5px solid #f26a2a; }

/* modal */
.modal { position: absolute; left: 275px; top: 439px; width: 707px; height: 328px; background: #fff; box-shadow: 0 0 6px rgba(0,0,0,.45); display: flex; flex-direction: column; }
.m-title { height: 44px; background: #00336a; color: #c3d8ea; font-size: 22px; line-height: 44px; padding-left: 25px; }
.m-body { height: 180px; margin: 14px 5px 0 14px; padding-top: 14px; border-top: 2px solid #eee; border-bottom: 2px solid #eee; font-size: 16px; font-weight: 700; color: #333; flex: none; }
.m-r { display: flex; align-items: center; height: 35px; white-space: nowrap; letter-spacing: -.4px; }
.m-r::before { content: ""; width: 15px; height: 15px; border: 1.5px solid #aaa; border-radius: 50%; margin-right: 10px; flex: none; }
.m-foot { display: flex; justify-content: flex-end; padding: 30px 20px 0 0; }
.m-ok { width: 97px; height: 37px; background: #e6e6e6; border: 1.5px solid #aaa; font-size: 17px; font-weight: 700; color: #333; }
.cursor { position: absolute; left: 557px; top: 460px; width: 14px; height: 26px; }

/* watermarks */
.wm1 {
  position: absolute; left: 133px; top: 57px; display: grid; grid-template-columns: repeat(7, 327px); grid-auto-rows: 326px;
  pointer-events: none;
}
.wm1 span {
  display: flex; align-items: center; justify-content: center; transform: rotate(-45deg); white-space: nowrap;
  font-size: 23px; letter-spacing: .8px; color: rgba(110,125,140,.13); font-family: "Noto Sans", "Noto Sans CJK SC", sans-serif;
}
.wm2 {
  position: absolute; left: -172px; top: -156px; display: grid; grid-template-columns: repeat(5, 458px); grid-auto-rows: 320px;
  pointer-events: none; filter: blur(1.1px);
}
.wm2 span { transform: rotate(-45deg); display: flex; flex-direction: column; justify-content: center; align-items: center; white-space: nowrap; font-size: 23px; color: rgba(130,135,145,.2); line-height: 36px; }
.wm2 b { display: block; }

/* taskbar */
.taskbar { height: 95px; flex: none; background: #1c1c1c; position: relative; display: flex; border-top: 1px solid #4a4a4a; color: #eee; filter: blur(.35px); }
.weather { width: 234px; flex: none; position: relative; }
.w-icon { position: absolute; left: 38px; top: 32px; width: 48px; height: 40px; }
.w-badge { position: absolute; left: 60px; top: 8px; width: 32px; height: 32px; border-radius: 50%; background: #c8291c; color: #fff; font: 400 20px/32px "Liberation Sans", sans-serif; text-align: center; }
.w-text { position: absolute; left: 101px; top: 17px; font-size: 22px; line-height: 27px; display: flex; flex-direction: column; }
.w-text span { font-family: "Liberation Sans", "Noto Sans CJK SC", sans-serif; }
.dim { color: #999; }
.share { position: absolute; left: 0; bottom: 0; width: 234px; height: 35px; background: #000; display: flex; align-items: center; border-radius: 0 10px 0 0; }
.share-user { width: 36px; height: 35px; background: #0a78f0; display: flex; align-items: center; justify-content: center; }
.share-user svg { width: 22px; height: 30px; }
.share-mic { width: 20px; height: 32px; margin-left: 5px; }
.share-scr { width: 22px; height: 32px; margin-left: 7px; }
.share-t { margin-left: 5px; font-size: 18px; color: #fff; white-space: nowrap; }
.tb-center { display: flex; align-items: center; margin-left: 359px; height: 95px; }
.start { width: 47px; height: 47px; }
.search { width: 436px; height: 61px; margin-left: 28px; background: #f2f2f2; border-radius: 31px; display: flex; align-items: center; color: #555; font-size: 28px; padding-left: 24px; position: relative; flex: none; }
.search-i { width: 30px; height: 34px; margin-right: 16px; }
.sun { position: absolute; right: 9px; top: 3px; width: 90px; height: 56px; }
.apps { display: flex; align-items: center; height: 95px; }
.app-i { width: 48px; height: 48px; }
.taskv { margin-left: 26px; }
.apps > svg:nth-child(2) { margin-left: 38px; }
.apps > svg:nth-child(3) { margin-left: 39px; width: 50px; height: 50px; }
.apps > svg:nth-child(4) { margin-left: 39px; }
.app-w { position: relative; height: 48px; display: block; }
.app-w:nth-child(5) { margin-left: 43px; width: 44px; }
.app-w:nth-child(6) { margin-left: 42px; width: 50px; }
.app-w:nth-child(7) { margin-left: 38px; width: 50px; }
.dot { position: absolute; left: 50%; margin-left: -4px; top: 57px; width: 8px; height: 8px; border-radius: 50%; background: #8a8a8a; }
.meet { width: 44px; height: 46px; }
.chat { width: 50px; height: 50px; }
.wps { width: 50px; height: 50px; }
.app-w.cur { margin-left: 22px; width: 81px; height: 81px; background: #2b2b2b; border-radius: 6px; padding: 17px 0 0 16px; }
.play { position: absolute; left: 40px; top: 42px; width: 24px; height: 28px; }
.line { position: absolute; left: 25px; top: 72px; width: 31px; height: 5px; background: #4fb8f2; border-radius: 3px; }
.tray { position: absolute; left: 1950px; top: 0; width: 600px; height: 95px; display: flex; align-items: center; }
.chev { width: 24px; height: 14px; margin-right: 34px; }
.t-sync { width: 36px; height: 44px; margin-right: 29px; }
.t-cloud { width: 34px; height: 40px; margin-right: 32px; }
.t-ime { width: 32px; font-size: 30px; margin-right: 28px; color: #eee; }
.t-wifi { width: 38px; height: 42px; margin-right: 9px; }
.t-vol { width: 36px; height: 42px; margin-right: 14px; }
.t-bat { width: 36px; height: 44px; margin-right: 30px; }
.clock { width: 110px; display: flex; flex-direction: column; align-items: flex-end; font-size: 22px; line-height: 32px; font-family: "Liberation Sans", sans-serif; color: #eee; }
.t-bell { width: 30px; height: 44px; margin-left: 18px; }
.zz { font-size: 13px; fill: #eee; }
```
